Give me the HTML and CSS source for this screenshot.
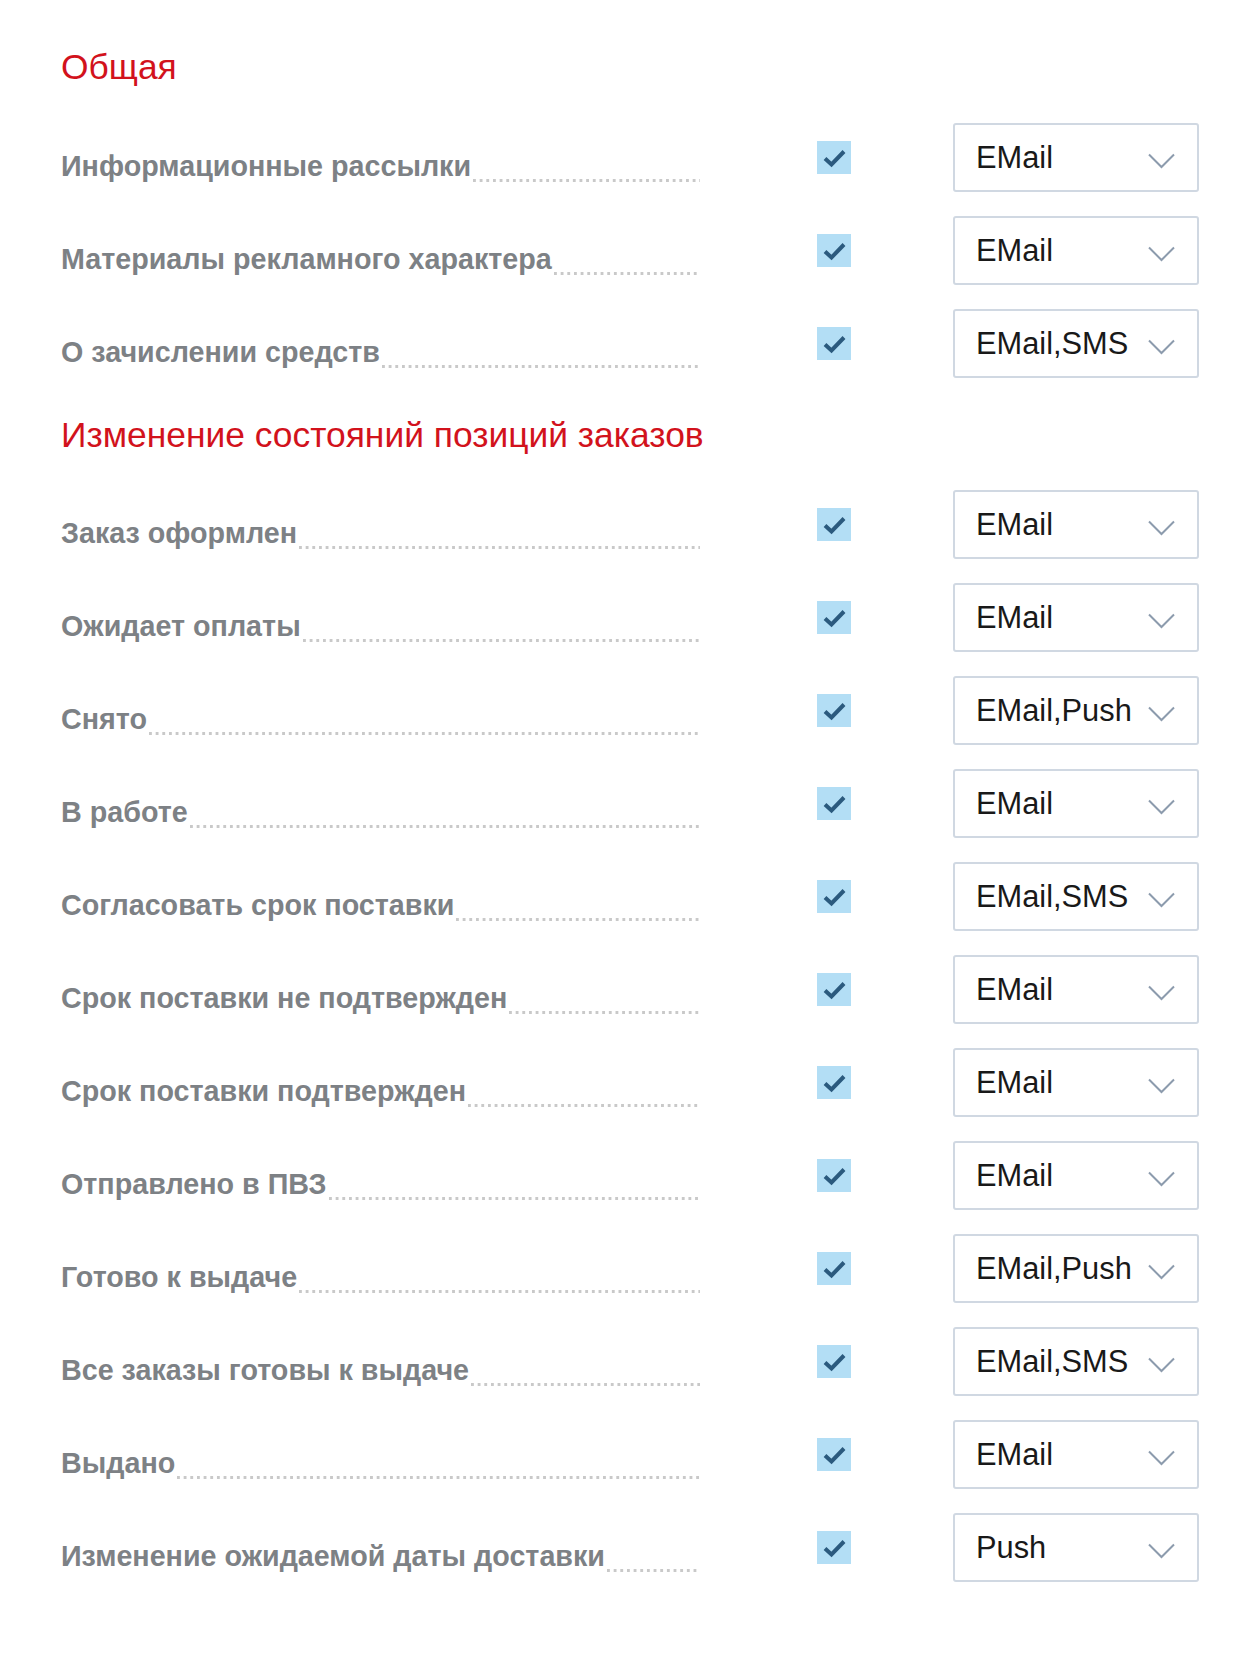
FILE: index.html
```html
<!DOCTYPE html>
<html lang="ru">
<head>
<meta charset="utf-8">
<title>Уведомления</title>
<link rel="stylesheet" href="styles.css">
</head>
<body>
<div class="page">
  <h2 class="section-title">Общая</h2>
  <div class="rows">
    <div class="row"><div class="label"><span class="label-text">Информационные рассылки</span><span class="leader"></span></div><div class="check"><svg viewBox="0 0 34 33" width="34" height="33"><rect width="34" height="33" fill="#b3def5"/><path d="M8 17.5 L14.5 23.5 L27 10.5" fill="none" stroke="#2b5a7e" stroke-width="4"/></svg></div><div class="select"><span class="select-value">EMail</span><svg class="chevron" viewBox="0 0 27 16" width="27" height="16"><path d="M1 1.5 L13.5 14 L26 1.5" fill="none" stroke="#8c9bad" stroke-width="2"/></svg></div></div>
    <div class="row"><div class="label"><span class="label-text">Материалы рекламного характера</span><span class="leader"></span></div><div class="check"><svg viewBox="0 0 34 33" width="34" height="33"><rect width="34" height="33" fill="#b3def5"/><path d="M8 17.5 L14.5 23.5 L27 10.5" fill="none" stroke="#2b5a7e" stroke-width="4"/></svg></div><div class="select"><span class="select-value">EMail</span><svg class="chevron" viewBox="0 0 27 16" width="27" height="16"><path d="M1 1.5 L13.5 14 L26 1.5" fill="none" stroke="#8c9bad" stroke-width="2"/></svg></div></div>
    <div class="row"><div class="label"><span class="label-text">О зачислении средств</span><span class="leader"></span></div><div class="check"><svg viewBox="0 0 34 33" width="34" height="33"><rect width="34" height="33" fill="#b3def5"/><path d="M8 17.5 L14.5 23.5 L27 10.5" fill="none" stroke="#2b5a7e" stroke-width="4"/></svg></div><div class="select"><span class="select-value">EMail,SMS</span><svg class="chevron" viewBox="0 0 27 16" width="27" height="16"><path d="M1 1.5 L13.5 14 L26 1.5" fill="none" stroke="#8c9bad" stroke-width="2"/></svg></div></div>
  </div>

  <h2 class="section-title second">Изменение состояний позиций заказов</h2>
  <div class="rows">
    <div class="row"><div class="label"><span class="label-text">Заказ оформлен</span><span class="leader"></span></div><div class="check"><svg viewBox="0 0 34 33" width="34" height="33"><rect width="34" height="33" fill="#b3def5"/><path d="M8 17.5 L14.5 23.5 L27 10.5" fill="none" stroke="#2b5a7e" stroke-width="4"/></svg></div><div class="select"><span class="select-value">EMail</span><svg class="chevron" viewBox="0 0 27 16" width="27" height="16"><path d="M1 1.5 L13.5 14 L26 1.5" fill="none" stroke="#8c9bad" stroke-width="2"/></svg></div></div>
    <div class="row"><div class="label"><span class="label-text">Ожидает оплаты</span><span class="leader"></span></div><div class="check"><svg viewBox="0 0 34 33" width="34" height="33"><rect width="34" height="33" fill="#b3def5"/><path d="M8 17.5 L14.5 23.5 L27 10.5" fill="none" stroke="#2b5a7e" stroke-width="4"/></svg></div><div class="select"><span class="select-value">EMail</span><svg class="chevron" viewBox="0 0 27 16" width="27" height="16"><path d="M1 1.5 L13.5 14 L26 1.5" fill="none" stroke="#8c9bad" stroke-width="2"/></svg></div></div>
    <div class="row"><div class="label"><span class="label-text">Снято</span><span class="leader"></span></div><div class="check"><svg viewBox="0 0 34 33" width="34" height="33"><rect width="34" height="33" fill="#b3def5"/><path d="M8 17.5 L14.5 23.5 L27 10.5" fill="none" stroke="#2b5a7e" stroke-width="4"/></svg></div><div class="select"><span class="select-value">EMail,Push</span><svg class="chevron" viewBox="0 0 27 16" width="27" height="16"><path d="M1 1.5 L13.5 14 L26 1.5" fill="none" stroke="#8c9bad" stroke-width="2"/></svg></div></div>
    <div class="row"><div class="label"><span class="label-text">В работе</span><span class="leader"></span></div><div class="check"><svg viewBox="0 0 34 33" width="34" height="33"><rect width="34" height="33" fill="#b3def5"/><path d="M8 17.5 L14.5 23.5 L27 10.5" fill="none" stroke="#2b5a7e" stroke-width="4"/></svg></div><div class="select"><span class="select-value">EMail</span><svg class="chevron" viewBox="0 0 27 16" width="27" height="16"><path d="M1 1.5 L13.5 14 L26 1.5" fill="none" stroke="#8c9bad" stroke-width="2"/></svg></div></div>
    <div class="row"><div class="label"><span class="label-text">Согласовать срок поставки</span><span class="leader"></span></div><div class="check"><svg viewBox="0 0 34 33" width="34" height="33"><rect width="34" height="33" fill="#b3def5"/><path d="M8 17.5 L14.5 23.5 L27 10.5" fill="none" stroke="#2b5a7e" stroke-width="4"/></svg></div><div class="select"><span class="select-value">EMail,SMS</span><svg class="chevron" viewBox="0 0 27 16" width="27" height="16"><path d="M1 1.5 L13.5 14 L26 1.5" fill="none" stroke="#8c9bad" stroke-width="2"/></svg></div></div>
    <div class="row"><div class="label"><span class="label-text">Срок поставки не подтвержден</span><span class="leader"></span></div><div class="check"><svg viewBox="0 0 34 33" width="34" height="33"><rect width="34" height="33" fill="#b3def5"/><path d="M8 17.5 L14.5 23.5 L27 10.5" fill="none" stroke="#2b5a7e" stroke-width="4"/></svg></div><div class="select"><span class="select-value">EMail</span><svg class="chevron" viewBox="0 0 27 16" width="27" height="16"><path d="M1 1.5 L13.5 14 L26 1.5" fill="none" stroke="#8c9bad" stroke-width="2"/></svg></div></div>
    <div class="row"><div class="label"><span class="label-text">Срок поставки подтвержден</span><span class="leader"></span></div><div class="check"><svg viewBox="0 0 34 33" width="34" height="33"><rect width="34" height="33" fill="#b3def5"/><path d="M8 17.5 L14.5 23.5 L27 10.5" fill="none" stroke="#2b5a7e" stroke-width="4"/></svg></div><div class="select"><span class="select-value">EMail</span><svg class="chevron" viewBox="0 0 27 16" width="27" height="16"><path d="M1 1.5 L13.5 14 L26 1.5" fill="none" stroke="#8c9bad" stroke-width="2"/></svg></div></div>
    <div class="row"><div class="label"><span class="label-text">Отправлено в ПВЗ</span><span class="leader"></span></div><div class="check"><svg viewBox="0 0 34 33" width="34" height="33"><rect width="34" height="33" fill="#b3def5"/><path d="M8 17.5 L14.5 23.5 L27 10.5" fill="none" stroke="#2b5a7e" stroke-width="4"/></svg></div><div class="select"><span class="select-value">EMail</span><svg class="chevron" viewBox="0 0 27 16" width="27" height="16"><path d="M1 1.5 L13.5 14 L26 1.5" fill="none" stroke="#8c9bad" stroke-width="2"/></svg></div></div>
    <div class="row"><div class="label"><span class="label-text">Готово к выдаче</span><span class="leader"></span></div><div class="check"><svg viewBox="0 0 34 33" width="34" height="33"><rect width="34" height="33" fill="#b3def5"/><path d="M8 17.5 L14.5 23.5 L27 10.5" fill="none" stroke="#2b5a7e" stroke-width="4"/></svg></div><div class="select"><span class="select-value">EMail,Push</span><svg class="chevron" viewBox="0 0 27 16" width="27" height="16"><path d="M1 1.5 L13.5 14 L26 1.5" fill="none" stroke="#8c9bad" stroke-width="2"/></svg></div></div>
    <div class="row"><div class="label"><span class="label-text">Все заказы готовы к выдаче</span><span class="leader"></span></div><div class="check"><svg viewBox="0 0 34 33" width="34" height="33"><rect width="34" height="33" fill="#b3def5"/><path d="M8 17.5 L14.5 23.5 L27 10.5" fill="none" stroke="#2b5a7e" stroke-width="4"/></svg></div><div class="select"><span class="select-value">EMail,SMS</span><svg class="chevron" viewBox="0 0 27 16" width="27" height="16"><path d="M1 1.5 L13.5 14 L26 1.5" fill="none" stroke="#8c9bad" stroke-width="2"/></svg></div></div>
    <div class="row"><div class="label"><span class="label-text">Выдано</span><span class="leader"></span></div><div class="check"><svg viewBox="0 0 34 33" width="34" height="33"><rect width="34" height="33" fill="#b3def5"/><path d="M8 17.5 L14.5 23.5 L27 10.5" fill="none" stroke="#2b5a7e" stroke-width="4"/></svg></div><div class="select"><span class="select-value">EMail</span><svg class="chevron" viewBox="0 0 27 16" width="27" height="16"><path d="M1 1.5 L13.5 14 L26 1.5" fill="none" stroke="#8c9bad" stroke-width="2"/></svg></div></div>
    <div class="row"><div class="label"><span class="label-text">Изменение ожидаемой даты доставки</span><span class="leader"></span></div><div class="check"><svg viewBox="0 0 34 33" width="34" height="33"><rect width="34" height="33" fill="#b3def5"/><path d="M8 17.5 L14.5 23.5 L27 10.5" fill="none" stroke="#2b5a7e" stroke-width="4"/></svg></div><div class="select"><span class="select-value">Push</span><svg class="chevron" viewBox="0 0 27 16" width="27" height="16"><path d="M1 1.5 L13.5 14 L26 1.5" fill="none" stroke="#8c9bad" stroke-width="2"/></svg></div></div>
  </div>
</div>
</body>
</html>
```

FILE: styles.css
```css
html, body {
  margin: 0;
  padding: 0;
  background: #ffffff;
}

body {
  font-family: "Liberation Sans", Arial, sans-serif;
}

.page {
  padding: 47px 0 0 61px;
  width: 1138px;
}

.section-title {
  margin: 0 0 36px 0;
  font-size: 35.4px;
  line-height: 40px;
  font-weight: normal;
  color: #d2121c;
}

.section-title.second {
  margin-top: 13px;
  margin-bottom: 35px;
}

.rows {
  display: flex;
  flex-direction: column;
}

.row {
  display: flex;
  align-items: center;
  height: 69px;
  margin-bottom: 24px;
}

.label {
  display: flex;
  align-items: flex-start;
  align-self: flex-start;
  width: 639px;
  padding-top: 27px;
}

.label-text {
  font-size: 28.7px;
  line-height: 32px;
  font-weight: bold;
  color: #7d8185;
  white-space: nowrap;
}

.leader {
  flex: 1;
  height: 3px;
  margin: 29px 0 0 2px;
  background-image: linear-gradient(to right, #c9c9c9 0, #c9c9c9 2.6px, transparent 2.6px);
  background-size: 6.67px 3px;
  background-repeat: repeat-x;
}

.check {
  width: 34px;
  height: 33px;
  margin-left: 117px;
  display: flex;
}

.check svg {
  display: block;
}

.select {
  box-sizing: border-box;
  width: 246px;
  height: 69px;
  margin-left: 102px;
  border: 2px solid #d0d8e2;
  border-radius: 3px;
  display: flex;
  align-items: center;
  justify-content: space-between;
  padding: 1px 22px 0 21px;
  background: #ffffff;
}

.select-value {
  font-size: 30.8px;
  line-height: 36px;
  color: #191919;
  white-space: nowrap;
}

.chevron {
  display: block;
  flex: none;
  margin-top: 5px;
}
```
